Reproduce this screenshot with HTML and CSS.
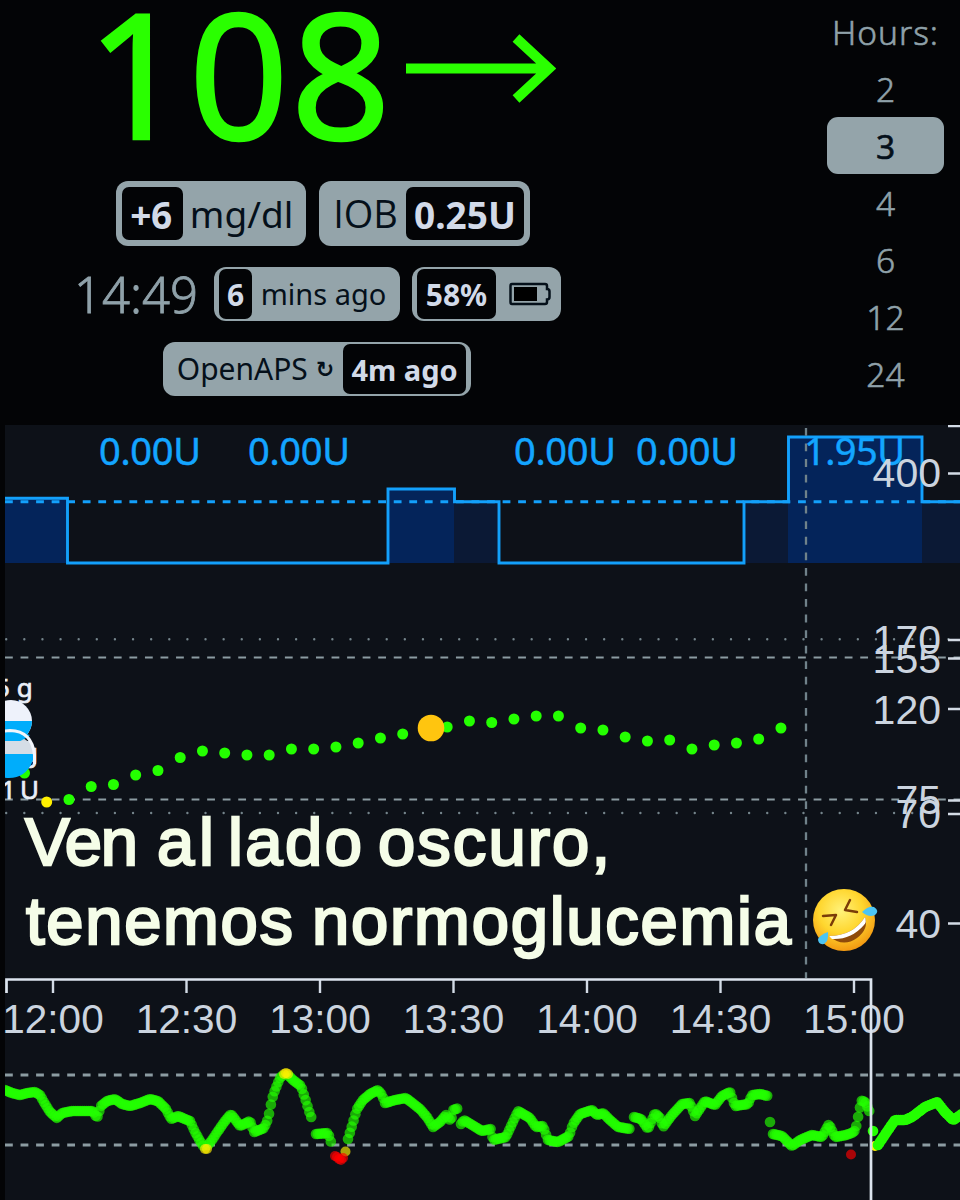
FILE: index.html
```html
<!DOCTYPE html>
<html lang="es">
<head>
    <meta charset="UTF-8">
    <meta name="viewport" content="width=device-width, initial-scale=1.0">
    <title>Nightscout</title>
    <link rel="stylesheet" href="styles.css">
</head>
<body>
    <header class="top">
        <div class="status">
            <div class="bg-row">
                <span class="current-bg">108</span>
                <svg class="direction" width="150" height="70" viewBox="0 0 150 70">
                    <path d="M0 34.500H142M110 4L143 34.500L110 65" />
                </svg>
            </div>
            <div class="row row-delta">
                <div class="pill delta"><em>+6</em><span>mg/dl</span></div>
                <div class="pill iob"><span>IOB</span><em>0.25U</em></div>
            </div>
            <div class="row row-time">
                <span class="clock">14:49</span>
                <div class="pill small ago"><em>6</em><span>mins ago</span></div>
                <div class="pill small battery"><em>58%</em>
                    <span><svg width="42" height="24" viewBox="0 0 42 24">
                        <path class="case" d="M3 2H36Q38 2 38 4V7Q40.500 7 40.500 9.500V15Q40.500 17.500 38 17.500V20Q38 22 36 22H3Q1.500 22 1.500 20V4Q1.500 2 3 2Z" />
                        <rect x="5" y="5" width="23" height="14" />
                    </svg></span>
                </div>
            </div>
            <div class="row row-loop">
                <div class="pill small loop"><span>OpenAPS <i>↻</i></span><em>4m ago</em></div>
            </div>
        </div>
        <ul class="hours">
            <li class="label">Hours:</li>
            <li>2</li>
            <li class="selected">3</li>
            <li>4</li>
            <li>6</li>
            <li>12</li>
            <li>24</li>
        </ul>
    </header>

    <svg class="chart" width="960" height="775" viewBox="0 425 960 775">
        <defs>
            <clipPath id="plot"><rect x="5" y="425" width="955" height="775" /></clipPath>
            <radialGradient id="face" cx=".45" cy=".35" r=".65">
                <stop offset="0" stop-color="#fff27a" />
                <stop offset=".55" stop-color="#ffd62e" />
                <stop offset="1" stop-color="#f39a12" />
            </radialGradient>
        </defs>
        <rect class="plot-bg" x="5" y="425" width="955" height="775" />

        <!-- basal -->
        <g clip-path="url(#plot)">
            <rect class="temp" x="5" y="498" width="63" height="65" />
            <rect class="temp" x="388" y="489" width="66" height="74" />
            <rect class="scheduled" x="454" y="502" width="45" height="61" />
            <rect class="scheduled" x="744" y="502" width="44" height="61" />
            <rect class="temp" x="788" y="437" width="134" height="126" />
            <rect class="scheduled" x="922" y="502" width="38" height="61" />
            <path class="basal-dash" d="M5 501.700H960" />
            <path class="basal-line" d="M0 498.300H67.500V563H388V489H454.500V501.700H499V563H744V501.700H788.500V437H922V501.700H965" />
        </g>
        <g class="basal-text">
            <text x="99" y="465" textLength="102">0.00U</text>
            <text x="248" y="465" textLength="102">0.00U</text>
            <text x="514" y="465" textLength="102">0.00U</text>
            <text x="636" y="465" textLength="102">0.00U</text>
            <text x="804" y="465" textLength="101">1.95U</text>
        </g>

        <!-- thresholds -->
        <path class="dots" d="M6.200 639.300H960M6.200 813H945" />
        <path class="dash" d="M5 657.500H960M5 799.500H960" />
        <path class="dash now" d="M806 428V978" />
        <path class="dash range" d="M5 1075H960M5 1145H960" />

        <!-- treatments -->
        <g clip-path="url(#plot)">
            <circle class="in" cx="24.500" cy="773" r="5.500" />
            <g class="treatment">
                <text x="-5" y="697">5 g</text>
                <circle cx="11" cy="721" r="21" fill="#eef2fb" />
                <path d="M-10 721H32A21 21 0 0 1 -10 721Z" fill="#00adfb" />
                <text x="22" y="762">g</text>
                <path d="M-14 754A25 24 0 0 1 35 754Z" fill="#ccd5df" />
                <path d="M-14 732Q10 752 30 735L5 728Z" fill="#00adfb" />
                <path d="M-14 741H30L35 754H-14Z" fill="#d5dde6" />
                <path d="M-14 754H35Q29 778 9 778Q-14 778 -14 754Z" fill="#00adfb" />
                <path d="M-12 746Q-5 730.500 10 730.500Q32 731 34.500 755V764" fill="none" stroke="#f2f5fb" stroke-width="3" />
                <text x="1" y="799">1</text>
                <text x="20" y="799">U</text>
            </g>
        </g>
        <g id="entries"></g>
        <circle class="calibration" cx="431" cy="728" r="13.300" />

        <!-- axes -->
        <path class="axis" d="M948 426H960M948 473.500H960M948 640H960M948 658.500H960M948 709H960M948 800.500H960M948 814H960M948 923.500H960" />
        <g class="y-labels">
            <text x="941" y="487">400</text>
            <text x="941" y="654">170</text>
            <text x="941" y="673">155</text>
            <text x="941" y="723.500">120</text>
            <text x="941" y="814">75</text>
            <text x="941" y="828">70</text>
            <text x="941" y="938">40</text>
        </g>
        <g id="times" class="x-labels"></g>
        <g id="history" clip-path="url(#plot)"></g>
        <path class="brush" d="M6.500 993V979.500H871V1200" />

        <g class="caption">
            <text y="865"><tspan x="25" textLength="113">Ven</tspan> <tspan x="157" textLength="57">al</tspan> <tspan x="228" textLength="134">lado</tspan> <tspan x="378" textLength="232">oscuro,</tspan></text>
            <text y="944"><tspan x="26" textLength="267">tenemos</tspan> <tspan x="312" textLength="479">normoglucemia</tspan></text>
        </g>

        <!-- rofl face -->
        <g>
            <circle cx="844" cy="920" r="31" fill="url(#face)" />
            <path d="M829 936Q853 936 865 917Q869 929 857 938Q843 948 829 936Z" fill="#8e4a0b" />
            <path d="M829 936Q853 936 865 917Q867 922 864 925Q851 940 832 939Z" fill="#fff" />
            <path d="M823 916L836 915L831 925M850 900L845 910L857 912" fill="none" stroke="#7b3c08" stroke-width="2.500" stroke-linecap="round" stroke-linejoin="round" />
            <path d="M862 912Q868 906 874 907Q880 911 875 915Q869 918 862 912Z" fill="#4cc5f4" />
            <path d="M828 932Q829 941 824 944Q818 945 818 939Q820 935 828 932Z" fill="#4cc5f4" />
        </g>
    </svg>

    <script>
        const NS = 'http://www.w3.org/2000/svg';

        function add(parent, tag, attrs, text) {
            const el = document.createElementNS(NS, tag);
            for (const key in attrs) el.setAttribute(key, attrs[key]);
            if (text) el.textContent = text;
            parent.appendChild(el);
        }

        function dot(parent, x, y, r, cls) {
            add(parent, 'circle', { cx: x, cy: y, r: r, class: cls });
        }

        // focus entries, one every 5 minutes
        const entries = document.getElementById('entries');
        const values = [802, 799.5, 786.5, 784.5, 775, 770.5, 757.5, 751, 753, 755, 755, 749, 749, 747, 743,
            738, 734, 728, 727, 721, 722.5, 719, 716, 716, 728, 730, 737, 741, 740, 749, 745, 743, 739, 728];
        values.forEach((y, i) => dot(entries, 46.7 + i * 22.25, y, 5.5, i === 0 ? 'warn' : 'in'));

        // time axis
        const times = document.getElementById('times');
        ['12:00', '12:30', '13:00', '13:30', '14:00', '14:30', '15:00'].forEach((label, i) => {
            const x = 53 + i * 133.5;
            add(times, 'path', { d: 'M' + x + ' 980V993', class: 'axis' });
            add(times, 'text', { x: x, y: 1032.5 }, label);
        });

        // context entries: unbroken runs of readings
        const history = document.getElementById('history');
        const runs = [
            [[5,1090],[12,1093],[20,1095],[27,1093],[35,1092],[40,1095],[45,1104],[50,1112],[57,1118],[62,1113],[72,1111],[85,1111],[93,1111],[97,1118],[101,1106],[107,1101],[115,1099],[122,1104],[130,1106],[140,1103],[150,1099],[158,1101],[166,1109],[171,1119],[178,1116],[190,1121],[195,1132],[200,1141],[204,1147]],
            [[208,1145],[212,1140],[218,1131],[225,1121],[231,1114],[240,1126],[250,1121],[254,1132],[264,1128],[268,1119],[270,1109],[272,1099],[275,1090],[280,1078],[283,1075]],
            [[289,1076],[293,1080],[301,1086],[305,1098],[309,1111],[313,1122]],
            [[316,1134],[328,1133],[332,1145]],
            [[348,1139],[351,1129],[354,1119],[357,1109],[363,1100],[370,1094],[378,1090],[382,1095],[385,1103],[395,1100],[406,1098],[420,1109],[427,1117],[433,1127],[440,1122],[446,1115],[451,1121],[453,1110],[459,1108]],
            [[461,1124],[464,1120],[482,1131],[491,1129],[493,1140],[506,1137],[512,1124],[518,1111],[530,1118],[536,1127],[543,1126],[548,1140],[558,1142],[569,1136],[573,1124],[580,1114],[592,1110],[597,1115],[603,1113],[610,1120],[618,1127],[631,1129]],
            [[634,1117],[641,1119],[648,1129],[655,1113],[660,1118],[663,1127],[672,1115],[682,1104],[690,1103],[695,1116],[705,1101],[715,1105],[722,1096],[730,1092],[735,1106],[748,1104],[752,1095],[760,1094],[768,1096]],
            [[770,1122]],
            [[773,1134],[782,1136],[792,1146],[800,1140],[812,1135],[822,1137],[829,1124],[835,1137],[846,1135],[854,1132],[857,1124],[859,1111],[862,1100],[866,1103],[870,1113]]
        ];
        const current = [[[873,1131]], [[878,1145],[886,1133],[895,1120],[905,1120],[912,1117],[925,1107],[937,1102],[945,1112],[953,1120],[962,1114]]];

        function drawRun(points, cls) {
            let k = 0;
            for (let x = points[0][0]; x <= points[points.length - 1][0]; x += 1.85) {
                while (k < points.length - 2 && x > points[k + 1][0]) k++;
                const a = points[k], b = points[k + 1] || a;
                const t = a === b ? 0 : (x - a[0]) / (b[0] - a[0]);
                dot(history, x, a[1] + (b[1] - a[1]) * t, 5.3, cls);
            }
        }

        runs.forEach(run => drawRun(run, 'in past'));
        [[205, 1149], [207, 1149], [284, 1074], [286, 1073], [288, 1074], [345.5, 1151.5]].forEach(p => dot(history, p[0], p[1], 5, 'warn past'));
        [[335, 1156], [337, 1157], [339, 1159], [341, 1160], [343, 1158], [851, 1154.5]].forEach(p => dot(history, p[0], p[1], 5, 'low past'));
        dot(history, 875, 1146, 5, 'warn');
        current.forEach(run => drawRun(run, 'in'));
    </script>
</body>
</html>
```

FILE: styles.css
```css
* {
    margin: 0;
    padding: 0;
    box-sizing: border-box;
}

body {
    width: 960px;
    height: 1200px;
    overflow: hidden;
    background: #030406;
    color: #8fa1a9;
    font-family: "Noto Sans", "Open Sans", sans-serif;
}

.top {
    height: 425px;
    display: flex;
    justify-content: space-between;
}

.status {
    width: 640px;
}

/* current reading */
.bg-row {
    height: 181px;
    padding-left: 87px;
    display: flex;
}

.current-bg {
    width: 319px;
    font-size: 174px;
    line-height: 144px;
    letter-spacing: 2.5px;
    color: #2aff00;
    -webkit-text-stroke: 2.5px #2aff00;
}

.direction {
    margin-top: 34px;
    fill: none;
    stroke: #2aff00;
    stroke-width: 10;
}

/* pills */
.row {
    display: flex;
    align-items: center;
}

.row-delta {
    height: 65px;
    padding-left: 116px;
    gap: 13px;
}

.row-time {
    height: 54px;
    margin-top: 21px;
    padding-left: 74px;
}

.row-loop {
    height: 54px;
    margin-top: 21px;
    padding-left: 163px;
}

.pill {
    height: 65px;
    padding: 6px;
    display: flex;
    background: #94a4aa;
    border-radius: 12px;
    color: #05101a;
    font-size: 38px;
    line-height: 55px;
    white-space: nowrap;
}

.pill em {
    flex: none;
    background: #030406;
    border-radius: 7px;
    color: #d2dae8;
    font-style: normal;
    font-weight: 700;
    text-align: center;
}

.pill span {
    flex: 1;
    display: flex;
    justify-content: center;
    align-items: center;
}

.delta {
    width: 190px;
}

.delta em {
    width: 61px;
    padding-right: 3px;
    letter-spacing: -0.5px;
    font-size: 37px;
}

.delta span {
    font-size: 37px;
}

.iob {
    width: 211px;
}

.iob span {
    font-family: "Open Sans", sans-serif;
}

.iob em {
    width: 118px;
    font-size: 37px;
}

.small {
    height: 54px;
    padding: 2px 5px;
    font-size: 30px;
    line-height: 52px;
}

.small em {
    font-size: 30px;
}

.clock {
    width: 140px;
    font-size: 49px;
    line-height: 51px;
    font-weight: 300;
    -webkit-text-stroke: 0.8px #8fa1a9;
}

.ago {
    width: 186px;
    margin-right: 12px;
}

.ago span {
    font-size: 29px;
}

.ago em {
    width: 33px;
}

.battery {
    width: 149px;
}

.battery em {
    width: 79px;
}

.battery span {
    padding-left: 7px;
}

.battery .case {
    fill: none;
    stroke: #05101a;
    stroke-width: 2.5;
}

.loop {
    width: 308px;
}

.loop em {
    width: 123px;
    font-size: 29px;
}

.loop i {
    margin-left: 8px;
    font: 700 22px "DejaVu Sans", sans-serif;
}

/* hours menu */
.hours {
    width: 117px;
    margin-right: 16px;
    list-style: none;
    text-align: center;
    font-size: 33.5px;
    font-weight: 300;
}

.hours li {
    height: 57px;
    line-height: 58px;
    border-radius: 11px;
    -webkit-text-stroke: 0.6px currentColor;
}

.hours .label {
    height: 60px;
    line-height: 65px;
    letter-spacing: 1px;
}

.hours .selected {
    background: #94a4aa;
    color: #05101a;
    font-weight: 400;
}

/* chart */
.chart {
    display: block;
}

.plot-bg {
    fill: #0d1118;
}

.temp {
    fill: #04245a;
}

.scheduled {
    fill: #0b1935;
}

.basal-line,
.basal-dash {
    fill: none;
    stroke: #13a0fb;
    stroke-width: 2.9;
}

.basal-dash {
    stroke-dasharray: 7.8 7.75;
}

.basal-text {
    fill: #13a5ff;
    stroke: #13a5ff;
    stroke-width: 0.5;
    font-size: 38px;
}

.dots {
    stroke: #74848b;
    stroke-width: 2.4;
    stroke-dasharray: 0 18.12;
    stroke-linecap: round;
}

.dash {
    stroke: #8c9ca2;
    stroke-width: 2.2;
    stroke-dasharray: 7.8 7.75;
}

.now {
    stroke: #70828a;
    stroke-width: 2.3;
}

.range {
    stroke-width: 2.8;
}

.in {
    fill: #24ff00;
}

.warn {
    fill: #fff000;
}

.low {
    fill: #ff0000;
}

.past {
    opacity: 0.65;
}

.calibration {
    fill: #ffc50f;
}

.treatment text {
    fill: #e9eef8;
    stroke: #e9eef8;
    stroke-width: 0.7;
    font-size: 26px;
}

.axis {
    fill: none;
    stroke: #d3dbe5;
    stroke-width: 2.4;
}

.y-labels,
.x-labels {
    fill: #cbd4df;
    font-family: "Liberation Sans", sans-serif;
    font-size: 41px;
    text-anchor: end;
}

.x-labels {
    text-anchor: middle;
    font-size: 40.5px;
}

.brush {
    fill: none;
    stroke: #dce4ee;
    stroke-width: 2.7;
}

.caption {
    fill: #f5fde8;
    stroke: #f5fde8;
    stroke-width: 2.4;
    font-family: "Liberation Sans", sans-serif;
    font-size: 67px;
}
```
